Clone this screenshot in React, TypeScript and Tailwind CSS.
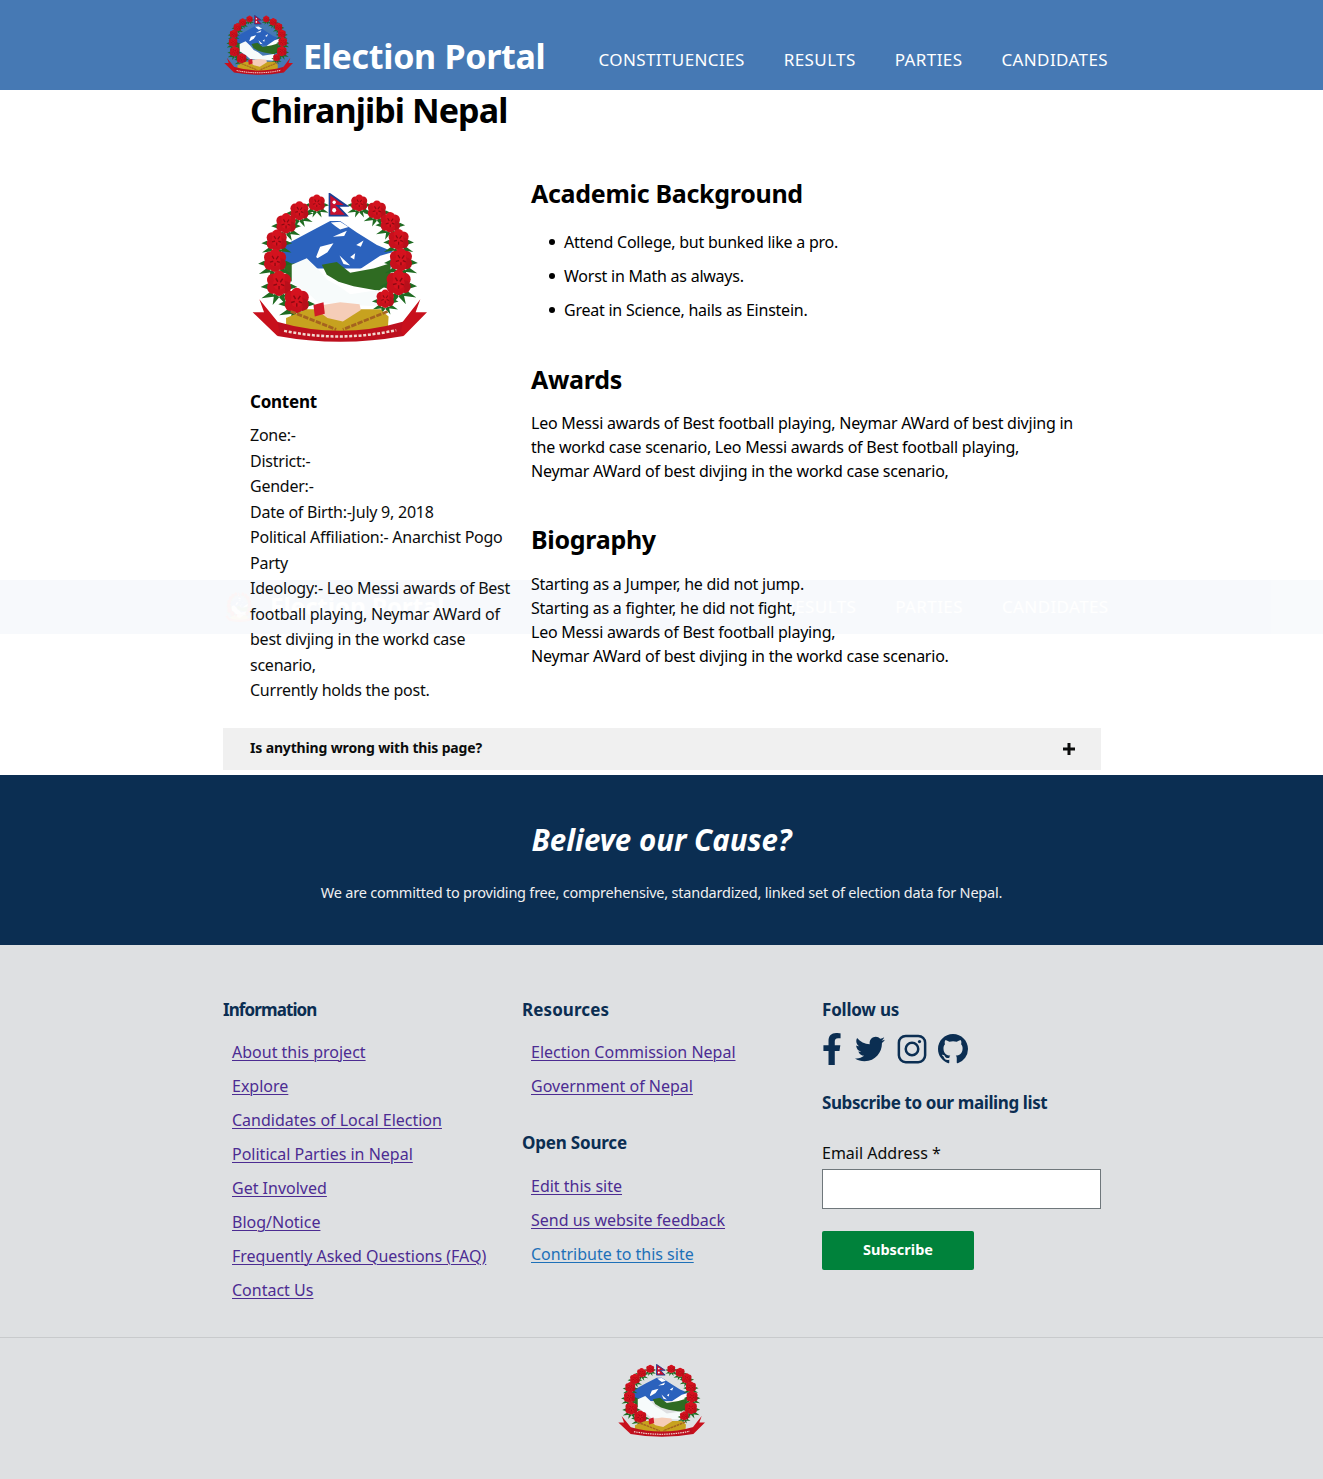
import React from 'react';

const font = 'font-["Noto_Sans",sans-serif]';

const flowers: [number, number, number][] = [
  [230, 68, 24], [178, 90, 27], [138, 125, 29], [110, 172, 30], [105, 228, 33], [117, 292, 36], [170, 340, 36],
  [357, 68, 24], [410, 88, 27], [450, 122, 29], [475, 170, 30], [482, 226, 33], [475, 290, 36], [435, 335, 26],
];

// Nepal coat of arms, redrawn by hand
const Emblem = ({ className }: { className: string }) => (
  <svg viewBox="36 40 524 415" preserveAspectRatio="none" className={className}>
    <path d="M125 190 L205 150 L270 118 L300 118 L350 150 L410 185 L462 205 L450 250 L125 250Z" fill="#2b62bd" />
    <path d="M272 122 L300 120 L325 135 L300 142 L285 132Z M228 218 L240 190 L280 180 L262 205 L232 222Z M348 185 L370 172 L362 190Z M298 214 L330 242 L310 238Z M330 218 L345 208 L342 225Z M278 162 L320 145 L312 160Z M360 252 L420 215 L456 205 L446 245 L400 258Z" fill="#fff" />
    <path d="M128 240 L165 236 L160 290 L145 280Z M245 240 L290 232 L330 262 L400 250 L450 236 L452 290 L415 312 L340 300 L295 287 L260 268Z" fill="#2f6b22" />
    <path d="M155 240 L200 222 L232 250 L262 282 L295 298 L330 322 L415 310 L418 356 L300 350 L235 345 L205 320 L155 290Z" fill="#f7fbfb" />
    {flowers.map(([x, y, r], i) => (
      <g key={i} transform={`translate(${x} ${y}) scale(${r / 30})`}>
        <path d="M-20 18 L-44 34 L-10 30Z M20 18 L44 34 L10 30Z M-12 24 L-16 50 L2 30Z M12 24 L18 50 L-2 30Z M-28 0 L-46 8 L-26 14Z M28 0 L46 8 L26 14Z" fill="#1f6b22" />
        <circle cx="-15" cy="-8" r="15" fill="#c8101c" />
        <circle cx="15" cy="-8" r="15" fill="#c8101c" />
        <circle cx="0" cy="-15" r="15" fill="#d5121e" />
        <circle cx="-15" cy="9" r="15" fill="#c8101c" />
        <circle cx="15" cy="9" r="15" fill="#b80f1a" />
        <circle cx="0" cy="14" r="15" fill="#c8101c" />
        <circle cx="0" cy="0" r="15" fill="#d5121e" />
        <path d="M-8 -12 L-3 -4 M9 -11 L3 -3 M-14 4 L-5 2 M13 5 L5 2 M0 6 L0 14" stroke="#8a0a12" strokeWidth="3.500" />
      </g>
    ))}
    <path d="M138 388 L200 364 L420 364 L445 384 L442 430 L300 450 L138 430Z" fill="#c7a21f" />
    <path d="M152 370 L288 420 M442 370 L308 420" stroke="#a5631f" strokeWidth="8" strokeDasharray="16 4" fill="none" />
    <path d="M248 352 L300 344 L358 350 L362 366 L308 398 L262 388 L245 376Z" fill="#f5cdb8" />
    <path d="M220 352 L250 344 L254 376 L224 384Z" fill="#d01a28" />
    <path d="M108 398 Q300 450 490 398 L490 438 Q300 470 112 438Z" fill="#bd0f1e" />
    <path d="M112 398 L118 425 L112 438 L38 372 L72 372 L58 336Z M488 398 L482 425 L490 438 L560 372 L526 372 L540 336Z" fill="#c8101c" />
    <path d="M132 424 Q300 456 468 422" stroke="#f2d8d0" strokeWidth="7" strokeDasharray="9 5" fill="none" />
    <path d="M268 42 L320 76 L292 76 L320 103 L268 103Z" fill="#c8102e" stroke="#1c3f94" strokeWidth="5" />
    <circle cx="282" cy="66" r="5" fill="#fff" />
    <circle cx="282" cy="88" r="6" fill="#fff" />
  </svg>
);

const infoLinks = ['About this project', 'Explore', 'Candidates of Local Election', 'Political Parties in Nepal', 'Get Involved', 'Blog/Notice', 'Frequently Asked Questions (FAQ)', 'Contact Us'];

const FooterLink = ({ label, blue }: { label: string; blue?: boolean }) => (
  <li className="h-[34px]">
    <a href="#" className={`underline underline-offset-2 decoration-1 ml-[9px] text-[16px] leading-[34px] tracking-[0px] ${blue ? 'text-[#1d70b8]' : 'text-[#4c2c92]'}`}>{label}</a>
  </li>
);

const FooterTitle = ({ children, className = 'tracking-[-0.2px]' }: { children: React.ReactNode; className?: string }) => (
  <h4 className={`text-[17px] font-bold leading-[24px] text-[#0b2e52] ${className}`}>{children}</h4>
);

const Row = ({ children }: { children: React.ReactNode }) => <div className="h-[25.5px] leading-[25.5px] whitespace-nowrap">{children}</div>;

const Bullet = ({ children }: { children: React.ReactNode }) => (
  <li className="flex items-center gap-[9px] h-[34px]">
    <span className="w-[6px] h-[6px] rounded-full bg-black" />
    {children}
  </li>
);

const navItems = ['CONSTITUENCIES', 'RESULTS', 'PARTIES', 'CANDIDATES'];

export default function App() {
  return (
    <div className={`${font} relative bg-white text-[#0b0c0c] text-[16px] tracking-[-0.24px] min-h-[1479px]`}>
      <header className="h-[90px] bg-[#4679b4]">
        <div className="ml-[223px] w-[878px] flex h-full">
          <Emblem className="shrink-0 w-[69px] h-[60px] mt-[15px] ml-[1px]" />
          <a href="#" className="shrink-0 whitespace-nowrap ml-[10px] mt-[35px] text-[34px] leading-[42px] font-bold text-white tracking-[-0.3px]">Election Portal</a>
          <nav className="shrink-0 ml-[53px] mt-[48px] flex gap-[39px] text-[17px] leading-[24px] text-white tracking-[0.4px]">
            {navItems.map((n) => <span key={n}>{n}</span>)}
          </nav>
        </div>
      </header>

      <main className="ml-[223px] w-[878px]">
        <h1 className="pl-[27px] text-[34px] leading-[40px] font-bold text-black tracking-[-0.9px]">Chiranjibi Nepal</h1>
        <div className="flex mt-[47px]">
          <aside className="w-[308px] pl-[27px] pr-[20px]">
            <Emblem className="w-[175px] h-[149px] mt-[16px] ml-[2px]" />
            <h4 className="mt-[48px] text-[17px] leading-[24px] font-bold text-black">Content</h4>
            <div className="mt-[9px]">
              <Row>Zone:-</Row>
              <Row>District:-</Row>
              <Row>Gender:-</Row>
              <Row>Date of Birth:-July 9, 2018</Row>
              <Row>Political Affiliation:- Anarchist Pogo</Row>
              <Row>Party</Row>
              <Row>Ideology:- Leo Messi awards of Best</Row>
              <Row>football playing, Neymar AWard of</Row>
              <Row>best divjing in the workd case</Row>
              <Row>scenario,</Row>
              <Row>Currently holds the post.</Row>
            </div>
          </aside>
          <section className="flex-1 text-black">
            <h2 className="text-[25px] leading-[32px] font-bold tracking-[-0.3px]">Academic Background</h2>
            <ul className="mt-[16px] ml-[18px]">
              <Bullet>Attend College, but bunked like a pro.</Bullet>
              <Bullet>Worst in Math as always.</Bullet>
              <Bullet>Great in Science, hails as Einstein.</Bullet>
            </ul>
            <h2 className="mt-[36px] text-[25px] leading-[32px] font-bold tracking-[-0.3px]">Awards</h2>
            <p className="mt-[16px] leading-[24px] whitespace-nowrap">Leo Messi awards of Best football playing, Neymar AWard of best divjing in<br />the workd case scenario, Leo Messi awards of Best football playing,<br />Neymar AWard of best divjing in the workd case scenario,</p>
            <h2 className="mt-[40px] text-[25px] leading-[32px] font-bold tracking-[-0.3px]">Biography</h2>
            <p className="mt-[17px] leading-[24px]">Starting as a Jumper, he did not jump.<br />Starting as a fighter, he did not fight,<br />Leo Messi awards of Best football playing,<br />Neymar AWard of best divjing in the workd case scenario.</p>
          </section>
        </div>
        <div className="mt-[24px] h-[42px] bg-[#f0f0f0] pl-[27px] pr-[26px] flex items-center justify-between">
          <span className="mb-[2px] text-[14px] font-bold text-[#0b0c0c] tracking-[-0.15px]">Is anything wrong with this page?</span>
          <svg viewBox="0 0 12 12" className="w-[12px] h-[12px]"><path d="M4.500 0h3v4.500H12v3H7.500V12h-3V7.500H0v-3h4.500z" fill="#0b0c0c" /></svg>
        </div>
      </main>

      <section className="mt-[5px] h-[170px] bg-[#0b2e52] text-center text-white pt-[47px]">
        <h2 className="text-[29.500px] leading-[36px] font-bold italic tracking-[0px]">Believe our Cause?</h2>
        <p className="mt-[22px] text-[14.500px] leading-[24px] text-[#f0f0f0] tracking-[-0.22px]">We are committed to providing free, comprehensive, standardized, linked set of election data for Nepal.</p>
      </section>

      <footer className="bg-[#dee0e2] h-[534px]">
        <div className="ml-[223px] w-[878px] grid grid-cols-[299px_300px_279px] pt-[53px] h-[392px]">
          <div>
            <FooterTitle className="tracking-[-0.9px]">Information</FooterTitle>
            <ul className="mt-[13px]">{infoLinks.map((l) => <FooterLink key={l} label={l} />)}</ul>
          </div>
          <div>
            <FooterTitle className="tracking-[0.1px]">Resources</FooterTitle>
            <ul className="mt-[13px]">
              <FooterLink label="Election Commission Nepal" />
              <FooterLink label="Government of Nepal" />
            </ul>
            <div className="mt-[28px]"><FooterTitle>Open Source</FooterTitle></div>
            <ul className="mt-[14px]">
              <FooterLink label="Edit this site" />
              <FooterLink label="Send us website feedback" />
              <FooterLink label="Contribute to this site" blue />
            </ul>
          </div>
          <div>
            <FooterTitle>Follow us</FooterTitle>
            <div className="flex items-center mt-[9px] h-[36px] text-[#0b2e52]">
              <svg viewBox="0 0 320 512" className="w-[20px] h-[32px]" fill="currentColor"><path d="M279.140 288l14.220-92.660h-88.910v-60.130c0-25.350 12.420-50.060 52.240-50.060h40.420V6.260S260.430 0 225.360 0c-73.220 0-121.080 44.380-121.080 124.720v70.620H22.890V288h81.390v224h100.170V288z" /></svg>
              <svg viewBox="0 0 512 512" className="ml-[13px] w-[30px] h-[30px]" fill="currentColor"><path d="M459.370 151.716c.325 4.548.325 9.097.325 13.645 0 138.720-105.583 298.558-298.558 298.558-59.452 0-114.680-17.219-161.137-47.106 8.447.974 16.568 1.299 25.340 1.299 49.055 0 94.213-16.568 130.274-44.832-46.132-.975-84.792-31.188-98.112-72.772 6.498.974 12.995 1.624 19.818 1.624 9.421 0 18.843-1.300 27.614-3.573-48.081-9.747-84.143-51.980-84.143-102.985v-1.299c13.969 7.797 30.214 12.670 47.431 13.319-28.264-18.843-46.781-51.005-46.781-87.391 0-19.492 5.197-37.360 14.294-52.954 51.655 63.675 129.300 105.258 216.365 109.807-1.624-7.797-2.599-15.918-2.599-24.040 0-57.828 46.782-104.934 104.934-104.934 30.213 0 57.502 12.670 76.670 33.137 23.715-4.548 46.456-13.320 66.599-25.340-7.798 24.366-24.366 44.833-46.132 57.827 21.117-2.273 41.584-8.122 60.426-16.243-14.292 20.791-32.161 39.308-52.628 54.253z" /></svg>
              <svg viewBox="0 0 24 24" className="ml-[12px] w-[30px] h-[30px]" fill="none" stroke="currentColor" strokeWidth="2"><rect x="1.500" y="1.500" width="21" height="21" rx="5.500" /><circle cx="12" cy="12" r="5" /><circle cx="18" cy="6" r="1.300" fill="currentColor" stroke="none" /></svg>
              <svg viewBox="0 0 16 16" className="ml-[11px] w-[30px] h-[30px]" fill="currentColor"><path d="M8 0C3.580 0 0 3.580 0 8c0 3.540 2.290 6.530 5.470 7.590.4.070.55-.170.55-.380 0-.190-.010-.820-.010-1.490-2.010.370-2.530-.490-2.690-.940-.090-.230-.480-.940-.820-1.130-.280-.150-.680-.520-.010-.530.630-.010 1.080.580 1.230.820.720 1.210 1.870.870 2.330.660.070-.520.280-.870.510-1.070-1.780-.200-3.640-.890-3.640-3.950 0-.870.310-1.590.820-2.150-.080-.200-.360-1.020.080-2.120 0 0 .670-.210 2.200.820.640-.180 1.320-.270 2-.270s1.360.090 2 .270c1.530-1.040 2.200-.820 2.200-.820.440 1.100.160 1.920.080 2.120.510.560.820 1.270.820 2.150 0 3.070-1.870 3.750-3.650 3.950.290.250.540.730.540 1.480 0 1.070-.010 1.930-.010 2.200 0 .210.150.460.550.380A8.010 8.010 0 0 0 16 8c0-4.420-3.580-8-8-8z" /></svg>
            </div>
            <h4 className="mt-[24px] text-[17px] leading-[24px] font-bold text-[#0b2e52] tracking-[-0.4px]">Subscribe to our mailing list</h4>
            <label className="block mt-[26px] leading-[24px] text-[#0b0c0c] tracking-[0px]">Email Address *</label>
            <input className="block mt-[4px] w-[279px] h-[40px] bg-white border border-[#6f777b]" />
            <button className="mt-[22px] w-[152px] h-[39px] rounded-[2px] bg-[#00823b] text-white text-[14.500px] font-bold tracking-[0px]">Subscribe</button>
          </div>
        </div>
        <div className="border-t border-[#c8cacc] flex justify-center pt-[26px]">
          <Emblem className="w-[87px] h-[73px]" />
        </div>
      </footer>

      {/* sticky header caught mid fade */}
      <div className="absolute left-0 right-0 top-[580px] h-[54px] bg-[#4679b4] opacity-[0.035]">
        <div className="ml-[223px] w-[878px] flex items-center h-full">
          <Emblem className="shrink-0 w-[29px] h-[30px] ml-[2px]" />
          <span className="shrink-0 whitespace-nowrap ml-[16px] w-[329px] text-[24.500px] font-bold text-white">Election Portal</span>
          <div className="shrink-0 flex gap-[39px] text-[17px] text-white tracking-[0.4px]">
            {navItems.map((n) => <span key={n}>{n}</span>)}
          </div>
        </div>
      </div>
    </div>
  );
}
